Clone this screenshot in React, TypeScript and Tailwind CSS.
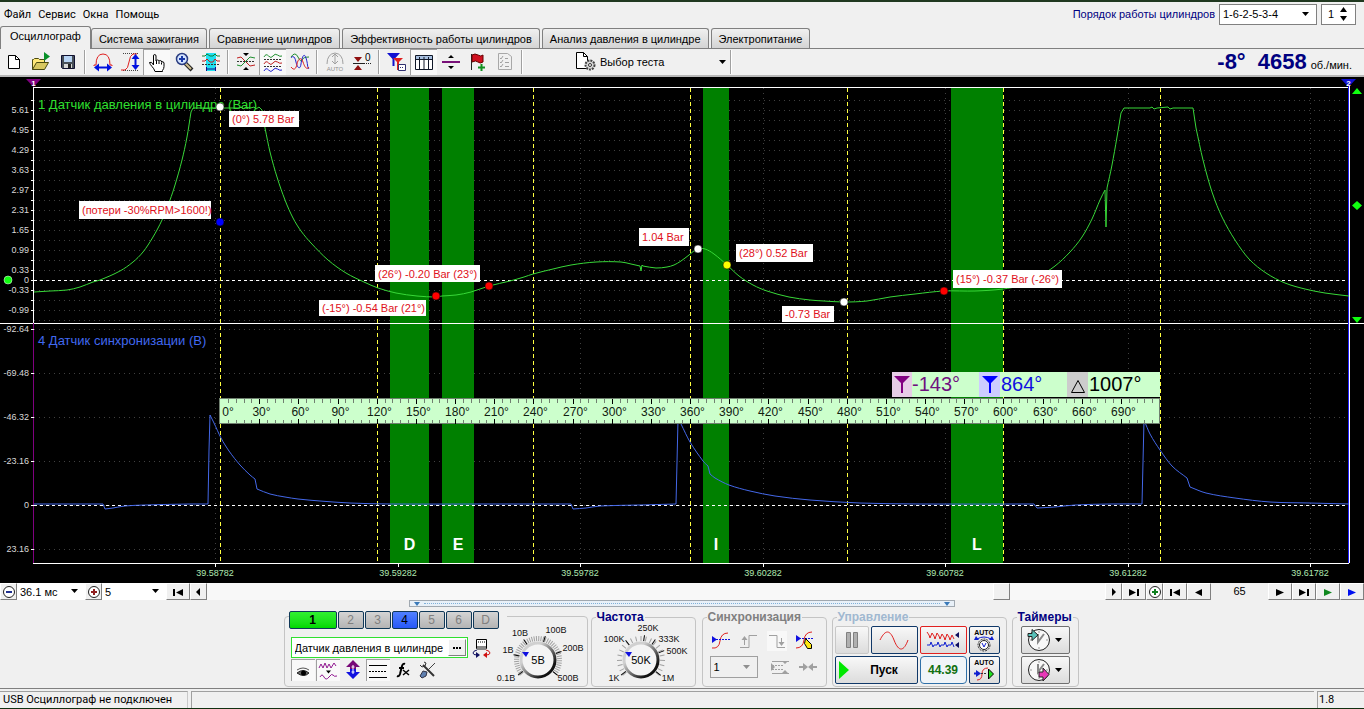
import { useState } from 'react'
import type { ReactNode } from 'react'
import clsx from 'clsx'

const tabs = [
  'Осциллограф',
  'Система зажигания',
  'Сравнение цилиндров',
  'Эффективность работы цилиндров',
  'Анализ давления в цилиндре',
  'Электропитание',
]

const menu = ['Файл', 'Сервис', 'Окна', 'Помощь']

const channels = ['1', '2', '3', '4', '5', '6', 'D']

/* ---------- chart data ---------- */

const bands = [
  { x: 390, w: 39, name: 'D' },
  { x: 442, w: 32, name: 'E' },
  { x: 703, w: 26, name: 'I' },
  { x: 951, w: 52, name: 'L' },
]

const strokes = [220.5, 377.5, 533.5, 690.5, 847.5, 1003.5, 1160.5]

const barAxis = [
  ['5.61', 110], ['4.95', 130], ['4.29', 150], ['3.63', 170], ['2.97', 190], ['2.31', 210],
  ['1.65', 230], ['0.99', 250], ['0.33', 270], ['0', 280], ['-0.33', 290], ['-0.99', 310],
] as const

const voltAxis = [
  ['-92.64', 329], ['-69.48', 373], ['-46.32', 417], ['-23.16', 461], ['0', 505], ['23.16', 549],
] as const

const timeAxis = [
  ['39.58782', 215], ['39.59282', 398], ['39.59782', 580], ['39.60282', 763],
  ['39.60782', 945], ['39.61282', 1128], ['39.61782', 1310],
] as const

const markers = [
  { x: 229, y: 111, w: 70, h: 16, text: '(0°) 5.78 Bar' },
  { x: 79, y: 201, w: 132, h: 18, text: '(потери -30%RPM>1600!)' },
  { x: 375, y: 265, w: 105, h: 17, text: '(26°) -0.20 Bar (23°)' },
  { x: 319, y: 300, w: 107, h: 16, text: '(-15°) -0.54 Bar (21°)' },
  { x: 639, y: 228, w: 50, h: 18, text: '1.04 Bar' },
  { x: 736, y: 244, w: 77, h: 18, text: '(28°) 0.52 Bar' },
  { x: 782, y: 306, w: 52, h: 16, text: '-0.73 Bar' },
  { x: 953, y: 270, w: 109, h: 18, text: '(15°) -0.37 Bar (-26°)' },
]

const dots = [
  [220, 107, '#fff'], [220, 222, '#00f'], [436, 296, '#f00'], [489, 286, '#f00'],
  [698, 249, '#fff'], [727, 265, '#ff0'], [844, 302, '#fff'], [944, 291, '#f00'],
] as const

const pressure =
  '34,292 50,291 67,290 80,287 93,282 100,280 120,271 133,262 143,252 153,237 162,220 170,200 175,185 182,160 187,137 191,112 193,108 ' +
  '240,108 241,107 243,109 246,107 250,108 254,107 256,109 259,107 262,110 265,128 270,152 277,177 285,200 293,218 301,231 311,243 328,260 346,273 ' +
  '364,282 378,288 396,293 417,296 436,297 442,296 456,295 471,292 489,286 510,281 524,277 533,274 553,269 571,265 596,262 621,262 ' +
  '631,264 640,266 641,271 642,265 643,266 656,268 667,267 674,265 681,261 689,255 697,249 705,249 714,254 727,265 739,276 753,285 767,291 ' +
  '789,297 810,300 824,301 844,302 867,301 890,297 915,294 944,291 975,291 1003,289 1022,285 1038,277 1055,266 1070,252 1082,237 1092,219 ' +
  '1100,200 1105,190 1106,227 1107,188 1112,165 1117,137 1121,113 1124,108 1150,108 1152,107 1154,109 1157,108 1168,107 1170,109 1173,108 1193,108 ' +
  '1196,128 1203,160 1212,192 1222,217 1235,240 1249,259 1266,273 1285,283 1305,289 1325,293 1349,296'

const sync =
  '34,504 50,504 70,504 103,504 105,509 113,508 125,506 145,505 190,504 208,504 209,450 210,415 214,423 221,438 229,451 240,465 250,475 255,479 ' +
  '257,489 270,494 285,497 298,499 320,501 350,503 390,504 480,504 571,504 573,509 586,508 600,506 640,505 676,504 678,420 681,424 690,442 ' +
  '703,461 708,466 710,474 715,478 729,485 750,491 775,496 810,500 860,503 920,504 1034,504 1037,508 1055,507 1075,505 1110,504 1142,504 1144,420 ' +
  '1150,434 1160,450 1172,466 1187,478 1190,487 1206,493 1235,498 1270,502 1310,503 1349,504'

// joins wide segments with a curve and leaves short ones (spikes, edges) straight
function tracePath(data: string) {
  const pts = data.split(' ').map(p => p.split(',').map(Number))
  const wide = (i: number) => i > 0 && i < pts.length && pts[i][0] - pts[i - 1][0] >= 4
  let d = `M${pts[0][0]} ${pts[0][1]}`
  for (let i = 1; i < pts.length; i++) {
    const [ax, ay] = pts[i - 1]
    const [bx, by] = pts[i]
    if (!wide(i)) {
      d += `L${bx} ${by}`
      continue
    }
    const slope = (by - ay) / (bx - ax)
    const start = wide(i - 1) ? (by - pts[i - 2][1]) / (bx - pts[i - 2][0]) : slope
    const end = wide(i + 1) ? (pts[i + 1][1] - ay) / (pts[i + 1][0] - ax) : slope
    const third = (bx - ax) / 3
    d += `C${ax + third} ${ay + start * third} ${bx - third} ${by - end * third} ${bx} ${by}`
  }
  return d
}

/* ---------- small icons ---------- */

function Svg({ w = 20, h = 20, children }: { w?: number, h?: number, children: ReactNode }) {
  return (
    <svg width={w} height={h} viewBox={`0 0 ${w} ${h}`} fill="none" strokeWidth="1" className="shrink-0" aria-hidden="true">
      {children}
    </svg>
  )
}

function DownArrow() {
  return <Svg w={8} h={5}><path d="M0 0h7L3.5 4z" fill="#000" /></Svg>
}

const NewIcon = () => (
  <Svg>
    <path d="M4.500 3.500h7l4 4v9h-11z" fill="#fff" stroke="#000" />
    <path d="M11.500 3.500v4h4" stroke="#000" />
  </Svg>
)

const OpenIcon = () => (
  <Svg>
    <path d="M1.500 17.500v-10h1l1-1h4l1 1h5v3" fill="#ffe878" stroke="#4a4a10" />
    <path d="M1.500 17.500l4-7h12l-4 7z" fill="#d8c860" stroke="#4a4a10" />
    <path d="M13 0v9l6-4.500z" fill="#089028" />
  </Svg>
)

const SaveIcon = () => (
  <Svg>
    <path d="M3.500 3.500h13v13h-12l-1-1z" fill="#485058" stroke="#101030" />
    <path d="M6 4h8v6H6z" fill="#b8d4f4" />
    <path d="M6 12h8v4H6z" fill="#d8d8d8" />
    <path d="M10 12h3v4h-3z" fill="#222" />
  </Svg>
)

const BellIcon = () => (
  <Svg>
    <path d="M1 14v-1h2q0-11 7-11t7 11h2v1" stroke="#e02020" />
    <path d="M5 15.500h10" stroke="#0010e0" strokeWidth="2" />
    <path d="M1 15.500l5-4v8zM19 15.500l-5-4v8z" fill="#0010e0" />
  </Svg>
)

const CurveIcon = () => (
  <Svg>
    <path d="M3 1.500h15M3 18.500h15" stroke="#444" strokeDasharray="1 1" />
    <path d="M1 18h4q3-1 4-8t4-8h4" stroke="#e02020" />
    <path d="M15.500 5v10" stroke="#0010e0" strokeWidth="2" />
    <path d="M15.500 2l-4 5h8zM15.500 18l-4-5h8z" fill="#0010e0" />
  </Svg>
)

const HandIcon = () => (
  <Svg>
    <path
      d="M6.500 12V3q0-1.500 1.200-1.500T9 3v5q0-1 1.500-1T12 8.500q0-1 1.300-1t1.300 1.500q2-1 2.400 1v3.500q0 2-1.500 4v1H8q-1-3-3-5t-2.500-4q2-1.500 4 2.500z"
      fill="#fff" stroke="#000"
    />
    <path d="M9.500 8v3M12 9v2M14.500 9.500v2" stroke="#000" />
  </Svg>
)

const ZoomIcon = () => (
  <Svg>
    <path d="M11 11l7 7" stroke="#222" strokeWidth="4" />
    <path d="M11 11l6 6" stroke="#d0c090" strokeWidth="2" />
    <circle cx="8" cy="7" r="5.500" fill="#d4e4ff" stroke="#2a3c80" strokeWidth="1.500" />
    <path d="M5 7h6M8 4v6" stroke="#1838a8" strokeWidth="2" />
  </Svg>
)

const CyanIcon = () => (
  <Svg>
    <path d="M5 1h10v18H5z" fill="#20e0f0" />
    <path d="M1 4h3l2-2 3 2h3l2-2 2 2h3" stroke="#108030" />
    <path d="M1 9h3l2-2 3 3h3l2-3 2 2h3" stroke="#c02020" />
    <path d="M1 12.500h18" stroke="#333" strokeDasharray="2 1" />
    <path d="M5.500 15v4M14.500 15v4M6 17h8" stroke="#101090" />
  </Svg>
)

const CrossWaveIcon = () => (
  <Svg>
    <path d="M1 6l4-1 9 9 5-1" stroke="#c02020" />
    <path d="M1 13l4 1 9-9 5 1" stroke="#209030" />
    <path d="M1 9.500h18" stroke="#333" strokeDasharray="2 1" />
    <path d="M7 1h6l-3 3zM7 18h6l-3-3z" fill="#000" />
  </Svg>
)

const wavy = (y: number) => `M1 ${y + 1}q2-4 4.500-1t4.500 0 4.500-1 4.500 1`

const ThreeWaveIcon = () => (
  <Svg>
    <path d={wavy(3)} stroke="#209030" />
    <path d={wavy(10)} stroke="#c02020" />
    <path d={wavy(17)} stroke="#2020d0" />
    <path d="M1 6.500h18M1 13.500h18" stroke="#333" strokeDasharray="2 1" />
  </Svg>
)

const MixWaveIcon = () => (
  <Svg>
    <path d="M1 5q4-6 7 0t4 3 7-3" stroke="#209030" />
    <path d="M1 6C3 3 5 5 6 10s4 9 5 2 3-12 5-6 1 9 3 11" stroke="#2020d0" />
    <path d="M1 15c3 4 5 2 6-3s4-8 6-2 4 8 6 5" stroke="#e02020" />
  </Svg>
)

const AutoIcon = () => (
  <Svg>
    <path d="M2 12q0-10 8-11 8 1 8 11M10 3v8M7 5l3-3 3 3M7 9l3 3 3-3" stroke="#a0a0a0" />
    <text x="10" y="19" textAnchor="middle" fontSize="6" fill="#909090">AUTO</text>
  </Svg>
)

const ZeroIcon = () => (
  <Svg>
    <path d="M1 11.500h11" stroke="#222" />
    <path d="M2 5h8l-4 5zM2 18h8l-4-5z" fill="#901010" />
    <path d="M12 11.500h8" stroke="#222" strokeDasharray="1 1" />
    <text x="13" y="9" fontSize="10" fill="#000">0</text>
  </Svg>
)

const FilterIcon = () => (
  <Svg>
    <path d="M0 1h13L7.500 7v7h-2V7z" fill="#1010d0" />
    <path d="M6 6h10l-4 4v8h-2v-8z" fill="#e02020" />
    <path d="M11.500 12.500h7v6h-7z" fill="#fff" stroke="#303070" />
    <path d="M13 15.500h4" stroke="#303070" strokeDasharray="1 1" />
  </Svg>
)

const TableIcon = () => (
  <Svg>
    <path d="M1.500 2.500h17v14h-17z" fill="#fff" stroke="#101828" />
    <path d="M2 3h16v4H2z" fill="#a8c0e0" />
    <path d="M1 6.500h18M5.500 4v12M10 4v12M14.500 4v12" stroke="#101828" />
  </Svg>
)

const SplitIcon = () => (
  <Svg>
    <path d="M1 10h18" stroke="#781078" strokeWidth="2" />
    <path d="M7 6h6l-3-3zM7 14h6l-3 3z" fill="#000" />
  </Svg>
)

const FlagIcon = () => (
  <Svg>
    <path d="M3.500 2v16" stroke="#222" />
    <path d="M4 3q3-2 6 0t5 0v7q-3 2-5 0t-6 0z" fill="#d01020" stroke="#600" />
    <path d="M13.500 12v7M10 15.500h7" stroke="#109020" strokeWidth="2" />
  </Svg>
)

const ChecklistIcon = () => (
  <Svg>
    <path d="M3.500 1.500h9l4 3v13h-13z" stroke="#a8a8a8" />
    <path d="M5 6l1 1 2-3M5 10l1 1 2-3M5 14l1 1 2-3M10 6.500h3M10 10.500h4M10 14.500h4" stroke="#a0a0a0" />
  </Svg>
)

const TestIcon = () => (
  <Svg>
    <path d="M.500.500h7l4 4v12h-11z" fill="#fff" stroke="#000" />
    <path d="M7.500.500v4h4" stroke="#000" />
    <circle cx="14" cy="13" r="4.500" fill="#d8d8d8" stroke="#444" strokeWidth="2" strokeDasharray="2 1" />
    <circle cx="14" cy="13" r="1.500" fill="#fff" stroke="#333" />
  </Svg>
)

const MeterIcon = () => (
  <Svg>
    <path d="M4.500 1.500h10v9h-10z" fill="#fff" stroke="#000" />
    <path d="M5 8h9v4H5z" fill="#888" />
    <path d="M6 4h7" stroke="#000" strokeDasharray="1 1" />
    <path d="M5 12q-4 1-4 3t4 2" stroke="#101060" />
    <path d="M4 14l4 3-4 3z" fill="#101060" />
    <path d="M14 12q4 1 4 3t-4 2" stroke="#d01010" />
    <path d="M15 14l-4 3 4 3z" fill="#d01010" />
  </Svg>
)

const EyeIcon = () => (
  <Svg>
    <path d="M4 9q6-4 12 0" stroke="#555" />
    <path d="M4 12q6-5 12 0-5 5-12 0z" fill="#666" stroke="#222" />
    <circle cx="10.500" cy="12" r="2.500" fill="#000" />
  </Svg>
)

const NoiseIcon = () => (
  <Svg>
    <path d="M1 7l2-4 2 4 2-5 2 5 2-4 2 4 3-5 2 3M2 16q2-4 4 0t5 0 4-2 4 1" stroke="#901890" />
    <path d="M8 9.500h5l-2.500 3z" fill="#000" />
  </Svg>
)

const UpDownIcon = () => (
  <Svg>
    <path d="M10 0l7 7h-4v3H7V7H3z" fill="#780878" />
    <path d="M10 19l7-7h-4v-3H7v3H3z" fill="#1010e0" />
    <path d="M10 5v9M8.500 7h3M8.500 12h3" stroke="#fff" />
  </Svg>
)

const LinesIcon = () => (
  <Svg>
    <path d="M1 4.500h18M1 16.500h18" stroke="#000" />
    <path d="M1 10.500h18" stroke="#000" strokeDasharray="2 1" />
  </Svg>
)

const FxIcon = () => (
  <Svg>
    <path d="M4 16q2 1 3-2l2-8q1-3 3-2M6 8h5" stroke="#000" strokeWidth="2" />
    <path d="M10 10l6 5M16 10l-6 5" stroke="#000" strokeWidth="1.500" />
  </Svg>
)

const ToolsIcon = () => (
  <Svg>
    <path d="M5 5l11 11" stroke="#333" strokeWidth="2" />
    <path d="M2 5l2 2 3-1 1-3-2-1" stroke="#333" />
    <path d="M17 3l-8 8" stroke="#444" />
    <path d="M2 16l3-5 4 1-1 4-4 2z" fill="#6080b0" stroke="#334" />
  </Svg>
)

const TrigIcon = () => (
  <Svg>
    <path d="M1 17q7 1 8-7t8-8" stroke="#e02020" />
    <path d="M2 8.500h17" stroke="#1010e0" strokeDasharray="2 1" />
    <path d="M1 5v7l5-3.500z" fill="#1010e0" />
  </Svg>
)

const RiseIcon = () => (
  <Svg>
    <path d="M1 16.500h9v-12h8" stroke="#a0a0a0" />
    <path d="M5.500 7v7" stroke="#a0a0a0" />
    <path d="M5.500 5l-3 4h6z" fill="#a0a0a0" />
  </Svg>
)

const FallIcon = () => (
  <Svg>
    <path d="M2 4.500h8v12h8" stroke="#a0a0a0" />
    <path d="M14.500 7v6" stroke="#a0a0a0" />
    <path d="M14.500 15l-3-4h6z" fill="#a0a0a0" />
  </Svg>
)

const TrigHandIcon = () => (
  <Svg>
    <path d="M1 17q7 0 8-8t8-8" stroke="#e02020" />
    <path d="M1 7.500h18" stroke="#1010e0" strokeDasharray="2 1" />
    <path d="M1 4v7l5-3.500z" fill="#1010e0" />
    <path d="M10.500 7.500l6 6v4h-4l-3-5z" fill="#ffe810" stroke="#000" />
  </Svg>
)

const LevelsIcon = () => (
  <Svg>
    <path d="M2 4.500h17M2 16.500h17" stroke="#a0a0a0" />
    <path d="M2 8.500h12M2 12.500h12" stroke="#a0a0a0" strokeDasharray="2 1" />
    <path d="M1 6v8l4-4zM12 4h6l-3 3zM12 16h6l-3-3z" fill="#a0a0a0" />
  </Svg>
)

const MeetIcon = () => (
  <Svg>
    <path d="M1 10h7M19 10h-7" stroke="#a0a0a0" strokeWidth="2" />
    <path d="M5 6v8l5-4zM15 6v8l-5-4z" fill="#a0a0a0" />
  </Svg>
)

const AutoGaugeIcon = () => (
  <Svg w={24} h={24}>
    <text x="12" y="7" textAnchor="middle" fontSize="7" fontWeight="bold" fill="#000">AUTO</text>
    <path d="M5 11q7-4 14 0" stroke="#1020d0" />
    <path d="M2 12h5l-3-4zM22 12h-5l3-4z" fill="#1020d0" />
    <circle cx="12" cy="17" r="6" stroke="#333" strokeDasharray="2 1" />
    <circle cx="12" cy="17" r="4.500" fill="#fff" stroke="#222" />
    <path d="M10 15l2 4 2-4" stroke="#1020d0" />
  </Svg>
)

const AutoSyncIcon = () => (
  <Svg w={24} h={24}>
    <text x="12" y="7" textAnchor="middle" fontSize="7" fontWeight="bold" fill="#000">AUTO</text>
    <path d="M5 22q5 0 5-6t6-6" stroke="#e02020" />
    <path d="M2 15.500h4" stroke="#1020d0" strokeWidth="2" />
    <path d="M4 12v7l5-3.500z" fill="#1020d0" />
    <path d="M9 15.500h6" stroke="#333" strokeDasharray="2 1" />
    <path d="M16.500 11v10l5-5z" fill="#20e020" stroke="#000" />
  </Svg>
)

function ClockIcon({ color, out }: { color: string, out?: boolean }) {
  return (
    <Svg w={24} h={24}>
      <circle cx="12" cy="12" r="10.500" fill="#f8f8f8" stroke="#222" />
      <path d="M12 3v2M12 19v2M3 12h2M19 12h2" stroke="#999" />
      <path d="M11 6v8l6-8" stroke="#888" strokeWidth="2" />
      {out
        ? <path d="M12 14h4v-4l6 6.500-6 6.500v-4h-4z" fill={color} stroke="#222" />
        : <path d="M1 5.500h4v-4l6 5.500-6 5.500v-4H1z" fill={color} stroke="#222" />}
    </Svg>
  )
}

/* ---------- shared controls ---------- */

function ToolButton({ label, pressed, children }: { label: string, pressed?: boolean, children: ReactNode }) {
  return (
    <button
      title={label}
      aria-label={label}
      className={clsx(
        'flex h-[26px] w-[27px] items-center justify-center',
        pressed && 'border-t border-l border-[#a0a0a0] bg-[#f9f9f9]'
      )}
    >
      {children}
    </button>
  )
}

function Separator() {
  return <div className="mx-[3px] h-6 w-[2px] border-l border-[#a0a0a0] bg-white" />
}

interface DropProps {
  label: string
  options: string[]
  className: string
  disabled?: boolean
}

function Drop({ label, options, className, disabled }: DropProps) {
  return (
    <div className={clsx('relative', className)}>
      <select aria-label={label} disabled={disabled} className="size-full appearance-none bg-transparent pl-[3px] text-[11px] text-black opacity-100 outline-none">
        {options.map(o => <option key={o}>{o}</option>)}
      </select>
      <span className={clsx('pointer-events-none absolute inset-y-0 right-1.5 flex items-center', disabled && 'opacity-40')}>
        <DownArrow />
      </span>
    </div>
  )
}

function NavButton({ label, className, color = '#000', d, children }: {
  label: string, className: string, color?: string, d?: string, children?: ReactNode
}) {
  return (
    <button
      aria-label={label}
      className={clsx(
        'flex h-[17px] shrink-0 items-center justify-center border border-t-white border-l-white border-r-[#808080] border-b-[#808080] bg-[#f0f0f0]',
        className
      )}
    >
      {d ? <Svg w={12} h={10}><path d={d} fill={color} /></Svg> : children}
    </button>
  )
}

function RoundSign({ color, minus }: { color: string, minus?: boolean }) {
  return (
    <Svg w={14} h={14}>
      <circle cx="7" cy="7" r="5.500" fill="#fff" stroke="#222" />
      <path d={minus ? 'M4 7h6' : 'M4 7h6M7 4v6'} stroke={color} strokeWidth="2" />
    </Svg>
  )
}

const toFirst = 'M1 2h2v7H1zM11 2v7L4 5.500z'
const toLast = 'M9 2h2v7H9zM1 2v7l7-3.500z'
const back = 'M9 2v7L2 5.500z'
const forward = 'M2 2v7l8-3.500z'
const stepBack = 'M7 1v8L3 5z'
const stepForward = 'M4 1v8l4-4z'

/* ---------- dials ---------- */

interface DialProps {
  name: string
  value: string
  gap: number
  labels: { text: string, x: number, y: number, a: number }[]
}

function Dial({ name, value, gap, labels }: DialProps) {
  const ticks = []
  for (let a = -220; a <= 40; a += gap) ticks.push(a)

  return (
    <svg width="96" height="66" viewBox="0 0 96 66" role="img" aria-label={`${name}: ${value}`}>
      <defs>
        <linearGradient id={`ring-${value}`} x1="0" y1="0" x2="1" y2="1">
          <stop offset="0.3" stopColor="#d0d0d0" />
          <stop offset="0.8" stopColor="#111" />
        </linearGradient>
      </defs>
      {ticks.map(a =>
        <path key={a} d="M19 0h5" stroke="#a0a0a0" transform={`translate(48 39) rotate(${a})`} />
      )}
      {labels.map(l =>
        <g key={l.text}>
          <path d="M19 0h6" stroke="#000" transform={`translate(48 39) rotate(${l.a})`} />
          <text x={l.x} y={l.y} textAnchor="middle" fontSize="9" fill="#111">{l.text}</text>
        </g>
      )}
      <circle cx="48" cy="39" r="17" fill="#f4f4f4" stroke={`url(#ring-${value})`} strokeWidth="3" />
      <path d="M32 31h7l-3 5z" fill="#1010e0" />
      <text x="48" y="43" textAnchor="middle" fontSize="11" fill="#000">{value}</text>
    </svg>
  )
}

/* ---------- oscillogram ---------- */

function Oscillogram() {
  const barRows = Array.from({ length: 23 }, (_, i) => 100 + i * 10)
  const degTicks = Array.from({ length: 119 }, (_, i) => (i + 1) * 6)
  const degLabels = Array.from({ length: 24 }, (_, i) => i * 30)
  const degX = (deg: number) => Math.round(220 + deg * 940 / 720) + 0.5

  return (
    <svg viewBox="0 77 1364 506" className="block h-auto w-full bg-black" role="img" aria-label="Осциллограмма">
      {/* grid */}
      <g stroke="#404040" strokeDasharray="1 4" shapeRendering="crispEdges">
        {barRows.map(y => <path key={y} d={`M34 ${y + 0.5}H1348`} />)}
        {voltAxis.map(([, y]) => <path key={y} d={`M34 ${y + 0.5}H1348`} />)}
        {timeAxis.map(([, x]) => <path key={x} d={`M${x + 0.5} 88V563`} />)}
      </g>

      {bands.map(b => <rect key={b.name} x={b.x} y="88" width={b.w} height="475" fill="#008000" />)}

      <g stroke="#fff" strokeDasharray="3 3" shapeRendering="crispEdges">
        <path d="M34 280.500H1348M34 505.500H1348" />
      </g>
      <g stroke="#ffff40" strokeDasharray="4 3" shapeRendering="crispEdges">
        {strokes.map(x => <path key={x} d={`M${x} 88V563`} />)}
      </g>

      {/* frame and axis ticks */}
      <g stroke="#fff" shapeRendering="crispEdges">
        <path d="M33 87.500H1349M0 323.500H1364M33 563.500H1349M33.500 87V323" />
        <path d="M33.500 323V563" stroke="#800080" />
        <path d="M1349.500 84V563" />
        <path d="M1348.500 84V563" stroke="#2020ff" />
        {barRows.filter(y => y < 320).map(y => <path key={y} d={`M31 ${y + 0.5}H34`} />)}
        {voltAxis.map(([, y]) => <path key={y} d={`M31 ${y + 0.5}H34`} />)}
        {timeAxis.map(([, x]) => <path key={x} d={`M${x + 0.5} 563V567`} />)}
      </g>
      <g fill="#d8d8d8" fontSize="9" textAnchor="end">
        {barAxis.map(([t, y]) => <text key={t} x="29" y={y + 3}>{t}</text>)}
        {voltAxis.map(([t, y]) => <text key={t} x="29" y={y + 3}>{t}</text>)}
      </g>
      <g fill="#b0e8b0" fontSize="9" textAnchor="middle">
        {timeAxis.map(([t, x]) => <text key={t} x={x} y="576">{t}</text>)}
      </g>

      <text x="38" y="109" fontSize="13" fill="#30e030">1 Датчик давления в цилиндре (Bar)</text>
      <text x="38" y="345" fontSize="13" fill="#4169f0">4 Датчик синхронизации (В)</text>

      <g fill="none" strokeWidth="1">
        <path d={tracePath(pressure)} stroke="#38d838" />
        <path d={tracePath(sync)} stroke="#4468e8" />
      </g>

      <g fill="#fff" fontSize="16" fontWeight="bold" textAnchor="middle">
        {bands.map(b => <text key={b.name} x={b.x + b.w / 2} y="550">{b.name}</text>)}
      </g>

      {markers.map(m =>
        <g key={m.text}>
          <rect x={m.x} y={m.y} width={m.w} height={m.h} fill="#fff" />
          <text x={m.x + 3} y={m.y + m.h / 2 + 4} fontSize="11" fill="#e01020">{m.text}</text>
        </g>
      )}
      {dots.map(([x, y, c]) => <circle key={x + c} cx={x} cy={y} r="4" fill={c} stroke="#000" strokeWidth="0.500" />)}

      {/* side handles */}
      <circle cx="8" cy="280" r="4" fill="#10ff10" stroke="#fff" strokeWidth="0.500" />
      <path d="M26 79h15l-7.500 8z" fill="#800080" />
      <text x="33.500" y="86" fontSize="8" fontWeight="bold" textAnchor="middle" fill="#fff">1</text>
      <path d="M1341 79h15l-7.500 8z" fill="#1010d0" />
      <text x="1348.500" y="86" fontSize="8" fontWeight="bold" textAnchor="middle" fill="#fff">2</text>
      <path d="M1352 94h10l-5-6zM1357 201l5 4.500-5 4.500-5-4.500zM1352 317h10l-5 6z" fill="#10ff10" />

      {/* degree ruler */}
      <rect x="219.500" y="398.500" width="940" height="25" fill="#ccffcc" stroke="#708070" />
      <g shapeRendering="crispEdges">
        {degTicks.map(d =>
          <path
            key={d}
            stroke={d % 30 ? '#708070' : '#000'}
            d={d % 30 ? `M${degX(d)} 399v4M${degX(d)} 420v3` : `M${degX(d)} 399v5M${degX(d)} 419v5`}
          />
        )}
      </g>
      <g fontSize="12" fill="#102010" textAnchor="middle">
        {degLabels.map(d => <text key={d} x={d ? degX(d) + 2 : 228} y="416">{d}°</text>)}
      </g>

      <rect x="892" y="372" width="268" height="25" fill="#ccffcc" />
      <rect x="892" y="372" width="20" height="25" fill="#e6cce6" />
      <rect x="979" y="372" width="21" height="25" fill="#ccccff" />
      <rect x="1067" y="372" width="21" height="25" fill="#cccccc" />
      <path d="M894 376h16l-7 7v10h-2v-10z" fill="#800080" />
      <path d="M982 376h16l-7 7v10h-2v-10z" fill="#0000ff" />
      <path d="M1071.500 392.500h13l-6.500-12z" fill="none" stroke="#000" />
      <g fontSize="20">
        <text x="912" y="391" fill="#701080">-143°</text>
        <text x="1001" y="391" fill="#1010e0">864°</text>
        <text x="1089" y="391" fill="#000">1007°</text>
      </g>
    </svg>
  )
}

/* ---------- control panel ---------- */

function Group({ title, titleClass, className, children }: {
  title: string, titleClass: string, className: string, children: ReactNode
}) {
  return (
    <fieldset className={clsx('h-[78px] min-w-0 shrink-0 rounded-[4px] border border-[#c4c4c4]', className)}>
      <legend className={clsx('ml-1 px-px text-[12px] leading-[16px] font-bold', titleClass)}>{title}</legend>
      {children}
    </fieldset>
  )
}

const bigButton = 'flex h-7 items-center justify-center rounded-[2px] border bg-linear-to-b from-[#f8f8f8] to-[#dcdcdc]'
const sunken = 'flex h-[22px] w-6 items-center justify-center border-t border-l border-[#a0a0a0] bg-[#f9f9f9]'

function ChannelGroup() {
  const [active, setActive] = useState('1')

  return (
    <fieldset aria-label="Каналы" className="mt-[7px] flex h-[71px] w-[304px] min-w-0 shrink-0 rounded-[4px] border border-[#c4c4c4]">
      <div className="w-[205px] shrink-0 pl-1">
        <div className="-mt-[6px] flex w-[218px] gap-px bg-[#f0f0f0]">
          {channels.map(c =>
            <button
              key={c}
              onClick={() => setActive(c)}
              className={clsx(
                'h-[18px] rounded-[2px] border border-[#103858] text-[12px] leading-4',
                c === active ? 'w-12 font-bold' : 'w-[26px]',
                c === '1' && 'bg-linear-to-b from-[#30f030] to-[#00d800]',
                c === '4' && 'bg-linear-to-b from-[#5080ff] to-[#2858f8]',
                c !== '1' && c !== '4' && 'bg-linear-to-b from-[#d4d4d4] to-[#b4b4b4] text-[#808080]'
              )}
            >
              {c}
            </button>
          )}
        </div>
        <div className="mt-2 ml-[2px] flex items-center gap-1">
          <div className="flex h-[21px] w-[177px] shrink-0 border border-[#30e030] bg-white">
            <input
              aria-label="Датчик"
              defaultValue="Датчик давления в цилиндре"
              className="w-0 grow pl-[3px] text-[11px] outline-none"
            />
            <button
              aria-label="Выбрать датчик"
              className="m-px flex w-[18px] items-center justify-center border border-t-white border-l-white border-r-[#808080] border-b-[#808080] bg-[#f0f0f0]"
            >
              <Svg w={8} h={2}><path d="M0 0h2v2H0zM3 0h2v2H3zM6 0h2v2H6z" fill="#000" /></Svg>
            </button>
          </div>
          <button aria-label="Измеритель"><MeterIcon /></button>
        </div>
        <div className="mt-px ml-[2px] flex h-[22px] items-center gap-px">
          <button aria-label="Показать" className={sunken}><EyeIcon /></button>
          <button aria-label="Фильтр" className={sunken}><NoiseIcon /></button>
          <button aria-label="Смещение" className="flex w-6 justify-center"><UpDownIcon /></button>
          <button aria-label="Уровни" className={sunken}><LinesIcon /></button>
          <button aria-label="Функция" className="flex w-6 justify-center"><FxIcon /></button>
          <button aria-label="Настройки" className="flex w-6 justify-center"><ToolsIcon /></button>
        </div>
      </div>
      <div className="mt-1">
        <Dial
          name="Диапазон"
          value="5B"
          gap={6}
          labels={[
            { text: '0.1B', x: 16, y: 60, a: 143 },
            { text: '1B', x: 18, y: 32, a: 192 },
            { text: '10B', x: 30, y: 15, a: 235 },
            { text: '100B', x: 66, y: 12, a: 287 },
            { text: '200B', x: 83, y: 30, a: 340 },
            { text: '500B', x: 78, y: 60, a: 38 },
          ]}
        />
      </div>
    </fieldset>
  )
}

function ControlPanel() {
  return (
    <div className="flex items-start justify-center pr-[2px]">
      <ChannelGroup />

      <Group title="Частота" titleClass="text-[#000080]" className="ml-[3px] w-[105px]">
        <div className="-mt-1 flex justify-center pr-1">
          <Dial
            name="Частота"
            value="50K"
            gap={13}
            labels={[
              { text: '1K', x: 21, y: 60, a: 143 },
              { text: '100K', x: 21, y: 21, a: 232 },
              { text: '250K', x: 55, y: 10, a: 278 },
              { text: '333K', x: 76, y: 21, a: 305 },
              { text: '500K', x: 84, y: 33, a: 338 },
              { text: '1M', x: 75, y: 60, a: 38 },
            ]}
          />
        </div>
      </Group>

      <Group title="Синхронизация" titleClass="text-[#808080]" className="ml-[6px] w-[125px]">
        <div className="mt-[3px] flex h-[26px] items-center gap-2 px-2">
          <button aria-label="Синхронизация по уровню"><TrigIcon /></button>
          <button aria-label="По фронту" disabled><RiseIcon /></button>
          <button aria-label="По спаду" disabled className="bg-[#f8f8f8]"><FallIcon /></button>
          <button aria-label="Установить уровень"><TrigHandIcon /></button>
        </div>
        <div className="mt-[2px] flex items-center gap-2 px-[7px]">
          <Drop label="Канал синхронизации" options={['1']} disabled className="mr-1 h-[22px] w-[48px] border border-[#a0a0a0]" />
          <button aria-label="Уровни синхронизации" disabled><LevelsIcon /></button>
          <button aria-label="Центрировать" disabled><MeetIcon /></button>
        </div>
      </Group>

      <Group title="Управление" titleClass="text-[#a0b8d0]" className="ml-[5px] w-[175px]">
        <div className="mt-px grid grid-cols-[34px_47px_47px_31px] gap-[2px] px-[2px]">
          <button aria-label="Пауза" disabled className={clsx(bigButton, 'border-[#c8c8c8]')}>
            <Svg w={12} h={16}><path d="M.500.500h4v15h-4zM7.500.500h4v15h-4z" fill="#b0b0b0" stroke="#808080" /></Svg>
          </button>
          <button aria-label="Синус" className={clsx(bigButton, 'border-[#103868]')}>
            <Svg w={30} h={20}><path d="M1 10C5 2 10-3 15 10s10 11 14 0" stroke="#e02020" /></Svg>
          </button>
          <button aria-label="Непрерывно" className={clsx(bigButton, 'border-[#e02020]')}>
            <Svg w={34} h={20}>
              <path d="M1 2l2 3 1 3 2-5 2 3 1 3 2-6 2 3 1 3 2-5 2 3 1 3 2-6 2 3 1 3 2-5 2 4" stroke="#e02020" />
              <path d="M1 15h3l1-3 2 5 1-2h3l1-3 2 5 1-2h3l1-3 2 5 1-2h3l1-3 2 5" stroke="#1020d0" />
              <path d="M33 2v6l-4-3zM33 12v6l-4-3z" fill="#101060" />
            </Svg>
          </button>
          <button aria-label="Авто диапазон" className={clsx(bigButton, 'border-[#103868]')}><AutoGaugeIcon /></button>
          <button className={clsx(bigButton, 'col-span-2 gap-5 border-[#103868] pr-4 text-[12px] font-bold')}>
            <Svg w={12} h={20}><path d="M1 1v18l10-9z" fill="#00e800" /></Svg>
            Пуск
          </button>
          <output className="flex h-7 items-center justify-center rounded-[4px] border border-[#3070a8] bg-[#f0f4f8] text-[12px] font-bold text-[#107010]">
            44.39
          </output>
          <button aria-label="Авто синхронизация" className={clsx(bigButton, 'border-[#103868]')}><AutoSyncIcon /></button>
        </div>
      </Group>

      <Group title="Таймеры" titleClass="text-[#000080]" className="ml-[5px] w-[67px]">
        <div className="mt-px flex flex-col items-center gap-[2px]">
          <button aria-label="Таймер включения" className={clsx(bigButton, 'w-[49px] gap-1 border-[#707070]')}>
            <ClockIcon color="#58c0b8" />
            <DownArrow />
          </button>
          <button aria-label="Таймер выключения" className={clsx(bigButton, 'w-[49px] gap-1 border-[#707070]')}>
            <ClockIcon color="#e838b8" out />
            <DownArrow />
          </button>
        </div>
      </Group>
    </div>
  )
}

export default function App() {
  const [tab, setTab] = useState(tabs[0])

  return (
    <main className="flex min-h-screen flex-col border-t-2 border-b border-t-[#203820] border-b-[#103010] bg-[#f0f0f0] font-['Liberation_Sans',Arial,sans-serif] text-[11px] leading-4 text-black">
      <header className="flex h-6 items-center justify-between">
        <nav className="flex gap-[7px] pt-px pl-1 font-['Roboto',sans-serif]">
          {menu.map(m => <button key={m}>{m}</button>)}
        </nav>
        <div className="flex items-center gap-1 pr-2">
          <span className="text-[#000080]">Порядок работы цилиндров</span>
          <Drop
            label="Порядок работы цилиндров"
            options={['1-6-2-5-3-4', '1-5-3-6-2-4']}
            className="h-[21px] w-[98px] border border-[#808080] bg-white"
          />
          <div className="flex h-[21px] w-[35px] items-center border border-[#808080] bg-white">
            <input aria-label="Цилиндр" defaultValue="1" className="w-[18px] pl-[6px] outline-none" />
            <div className="flex flex-col gap-1">
              <button aria-label="Больше"><Svg w={8} h={5}><path d="M0 5h7L3.500 0z" fill="#000" /></Svg></button>
              <button aria-label="Меньше"><Svg w={8} h={5}><path d="M0 0h7L3.500 5z" fill="#000" /></Svg></button>
            </div>
          </div>
        </div>
      </header>

      <div role="tablist" className="flex h-[23px] items-end border-b border-[#808080]">
        {tabs.map(t =>
          <button
            key={t}
            role="tab"
            aria-selected={t === tab}
            onClick={() => setTab(t)}
            className={clsx(
              'rounded-t-[3px] border border-b-0 border-[#808080] whitespace-nowrap',
              t === tab
                ? '-mb-px h-[23px] bg-[#f0f0f0] px-[9px] pb-1'
                : 'mr-[2px] h-5 bg-linear-to-b from-[#f0f0f0] to-[#d4d4d4] px-[7px]'
            )}
          >
            {t}
          </button>
        )}
      </div>

      <div className="flex h-7 items-center border-b-2 border-[#b8b8b8]">
        <ToolButton label="Новый"><NewIcon /></ToolButton>
        <ToolButton label="Открыть"><OpenIcon /></ToolButton>
        <ToolButton label="Сохранить"><SaveIcon /></ToolButton>
        <Separator />
        <ToolButton label="По ширине"><BellIcon /></ToolButton>
        <ToolButton label="По высоте"><CurveIcon /></ToolButton>
        <ToolButton label="Рука" pressed><HandIcon /></ToolButton>
        <ToolButton label="Масштаб"><ZoomIcon /></ToolButton>
        <ToolButton label="Выделение"><CyanIcon /></ToolButton>
        <Separator />
        <ToolButton label="Наложить"><CrossWaveIcon /></ToolButton>
        <ToolButton label="Разделить" pressed><ThreeWaveIcon /></ToolButton>
        <ToolButton label="Совместить"><MixWaveIcon /></ToolButton>
        <Separator />
        <ToolButton label="Авто"><AutoIcon /></ToolButton>
        <ToolButton label="Ноль"><ZeroIcon /></ToolButton>
        <Separator />
        <ToolButton label="Маркеры"><FilterIcon /></ToolButton>
        <ToolButton label="Таблица" pressed><TableIcon /></ToolButton>
        <ToolButton label="Линейка"><SplitIcon /></ToolButton>
        <ToolButton label="Флаг"><FlagIcon /></ToolButton>
        <ToolButton label="Список"><ChecklistIcon /></ToolButton>
        <Separator />
        <button className="ml-[50px] flex w-[151px] items-center gap-1">
          <TestIcon />
          <span className="grow text-left">Выбор теста</span>
          <DownArrow />
        </button>
        <Separator />
        <div className="ml-auto flex items-baseline pr-3 text-[#000080]">
          <strong className="mr-3 text-[22px] leading-6">-8°</strong>
          <strong className="mr-1 text-[22px] leading-6">4658</strong>
          <span className="text-black">об./мин.</span>
        </div>
      </div>

      <Oscillogram />

      <div className="flex h-[17px] items-stretch">
        <NavButton label="Сжать" className="w-[17px]"><RoundSign color="#203090" minus /></NavButton>
        <Drop label="Развёртка" options={['36.1 мс']} className="w-[68px] shrink-0 bg-white" />
        <NavButton label="Растянуть" className="w-[17px]"><RoundSign color="#902020" /></NavButton>
        <Drop label="Масштаб" options={['5']} className="w-[64px] shrink-0 bg-white" />
        <NavButton label="В начало" className="w-[24px]" d={toFirst} />
        <NavButton label="Влево" className="w-[17px]" d={stepBack} />
        <input
          type="range"
          aria-label="Прокрутка"
          defaultValue={892}
          max={1000}
          className="h-[17px] min-w-0 grow appearance-none bg-[#f8f8f8] outline-none [&::-webkit-slider-thumb]:h-[17px] [&::-webkit-slider-thumb]:w-[17px] [&::-webkit-slider-thumb]:appearance-none [&::-webkit-slider-thumb]:border [&::-webkit-slider-thumb]:border-t-white [&::-webkit-slider-thumb]:border-l-white [&::-webkit-slider-thumb]:border-r-[#808080] [&::-webkit-slider-thumb]:border-b-[#808080] [&::-webkit-slider-thumb]:bg-[#f0f0f0]"
        />
        <NavButton label="Вправо" className="w-[17px]" d={stepForward} />
        <NavButton label="В конец" className="w-[24px]" d={toLast} />
        <NavButton label="Добавить" className="w-[17px]"><RoundSign color="#108020" /></NavButton>
        <NavButton label="Первый кадр" className="w-[24px]" d={toFirst} />
        <NavButton label="Предыдущий кадр" className="w-[24px]" d={back} />
        <span className="w-[57px] shrink-0 text-center leading-[17px]">65</span>
        <NavButton label="Следующий кадр" className="w-[24px]" d={forward} />
        <NavButton label="Последний кадр" className="w-[24px]" d={toLast} />
        <NavButton label="Воспроизвести" className="w-[24px]" d={forward} color="#108820" />
        <NavButton label="Воспроизвести всё" className="w-[24px]" d={forward} color="#0010f0" />
      </div>

      <div className="flex h-[9px] items-start justify-center">
        <button aria-label="Свернуть панель" className="flex h-[7px] w-[546px] items-center justify-between border border-[#a0a8b0] bg-[#e8f0f8] px-1">
          <Svg w={6} h={4}><path d="M0 0h6L3 4z" fill="#3878b8" /></Svg>
          <span className="mx-1 grow border-t border-dotted border-[#80b0d8]" />
          <Svg w={6} h={4}><path d="M0 0h6L3 4z" fill="#3878b8" /></Svg>
        </button>
      </div>

      <ControlPanel />

      <footer className="mt-px flex h-[20px] gap-[3px] border-t border-[#808080] pt-[2px] font-['Roboto',sans-serif]">
        <div className="w-[188px] shrink-0 border-t border-r border-t-[#a0a0a0] border-r-[#c8c8c8] pl-[3px]">USB Осциллограф не подключен</div>
        <div className="grow border-t border-l border-[#a0a0a0]" />
        <div className="w-[47px] border-t border-l border-[#a0a0a0] pl-px">1.8</div>
      </footer>
    </main>
  )
}
